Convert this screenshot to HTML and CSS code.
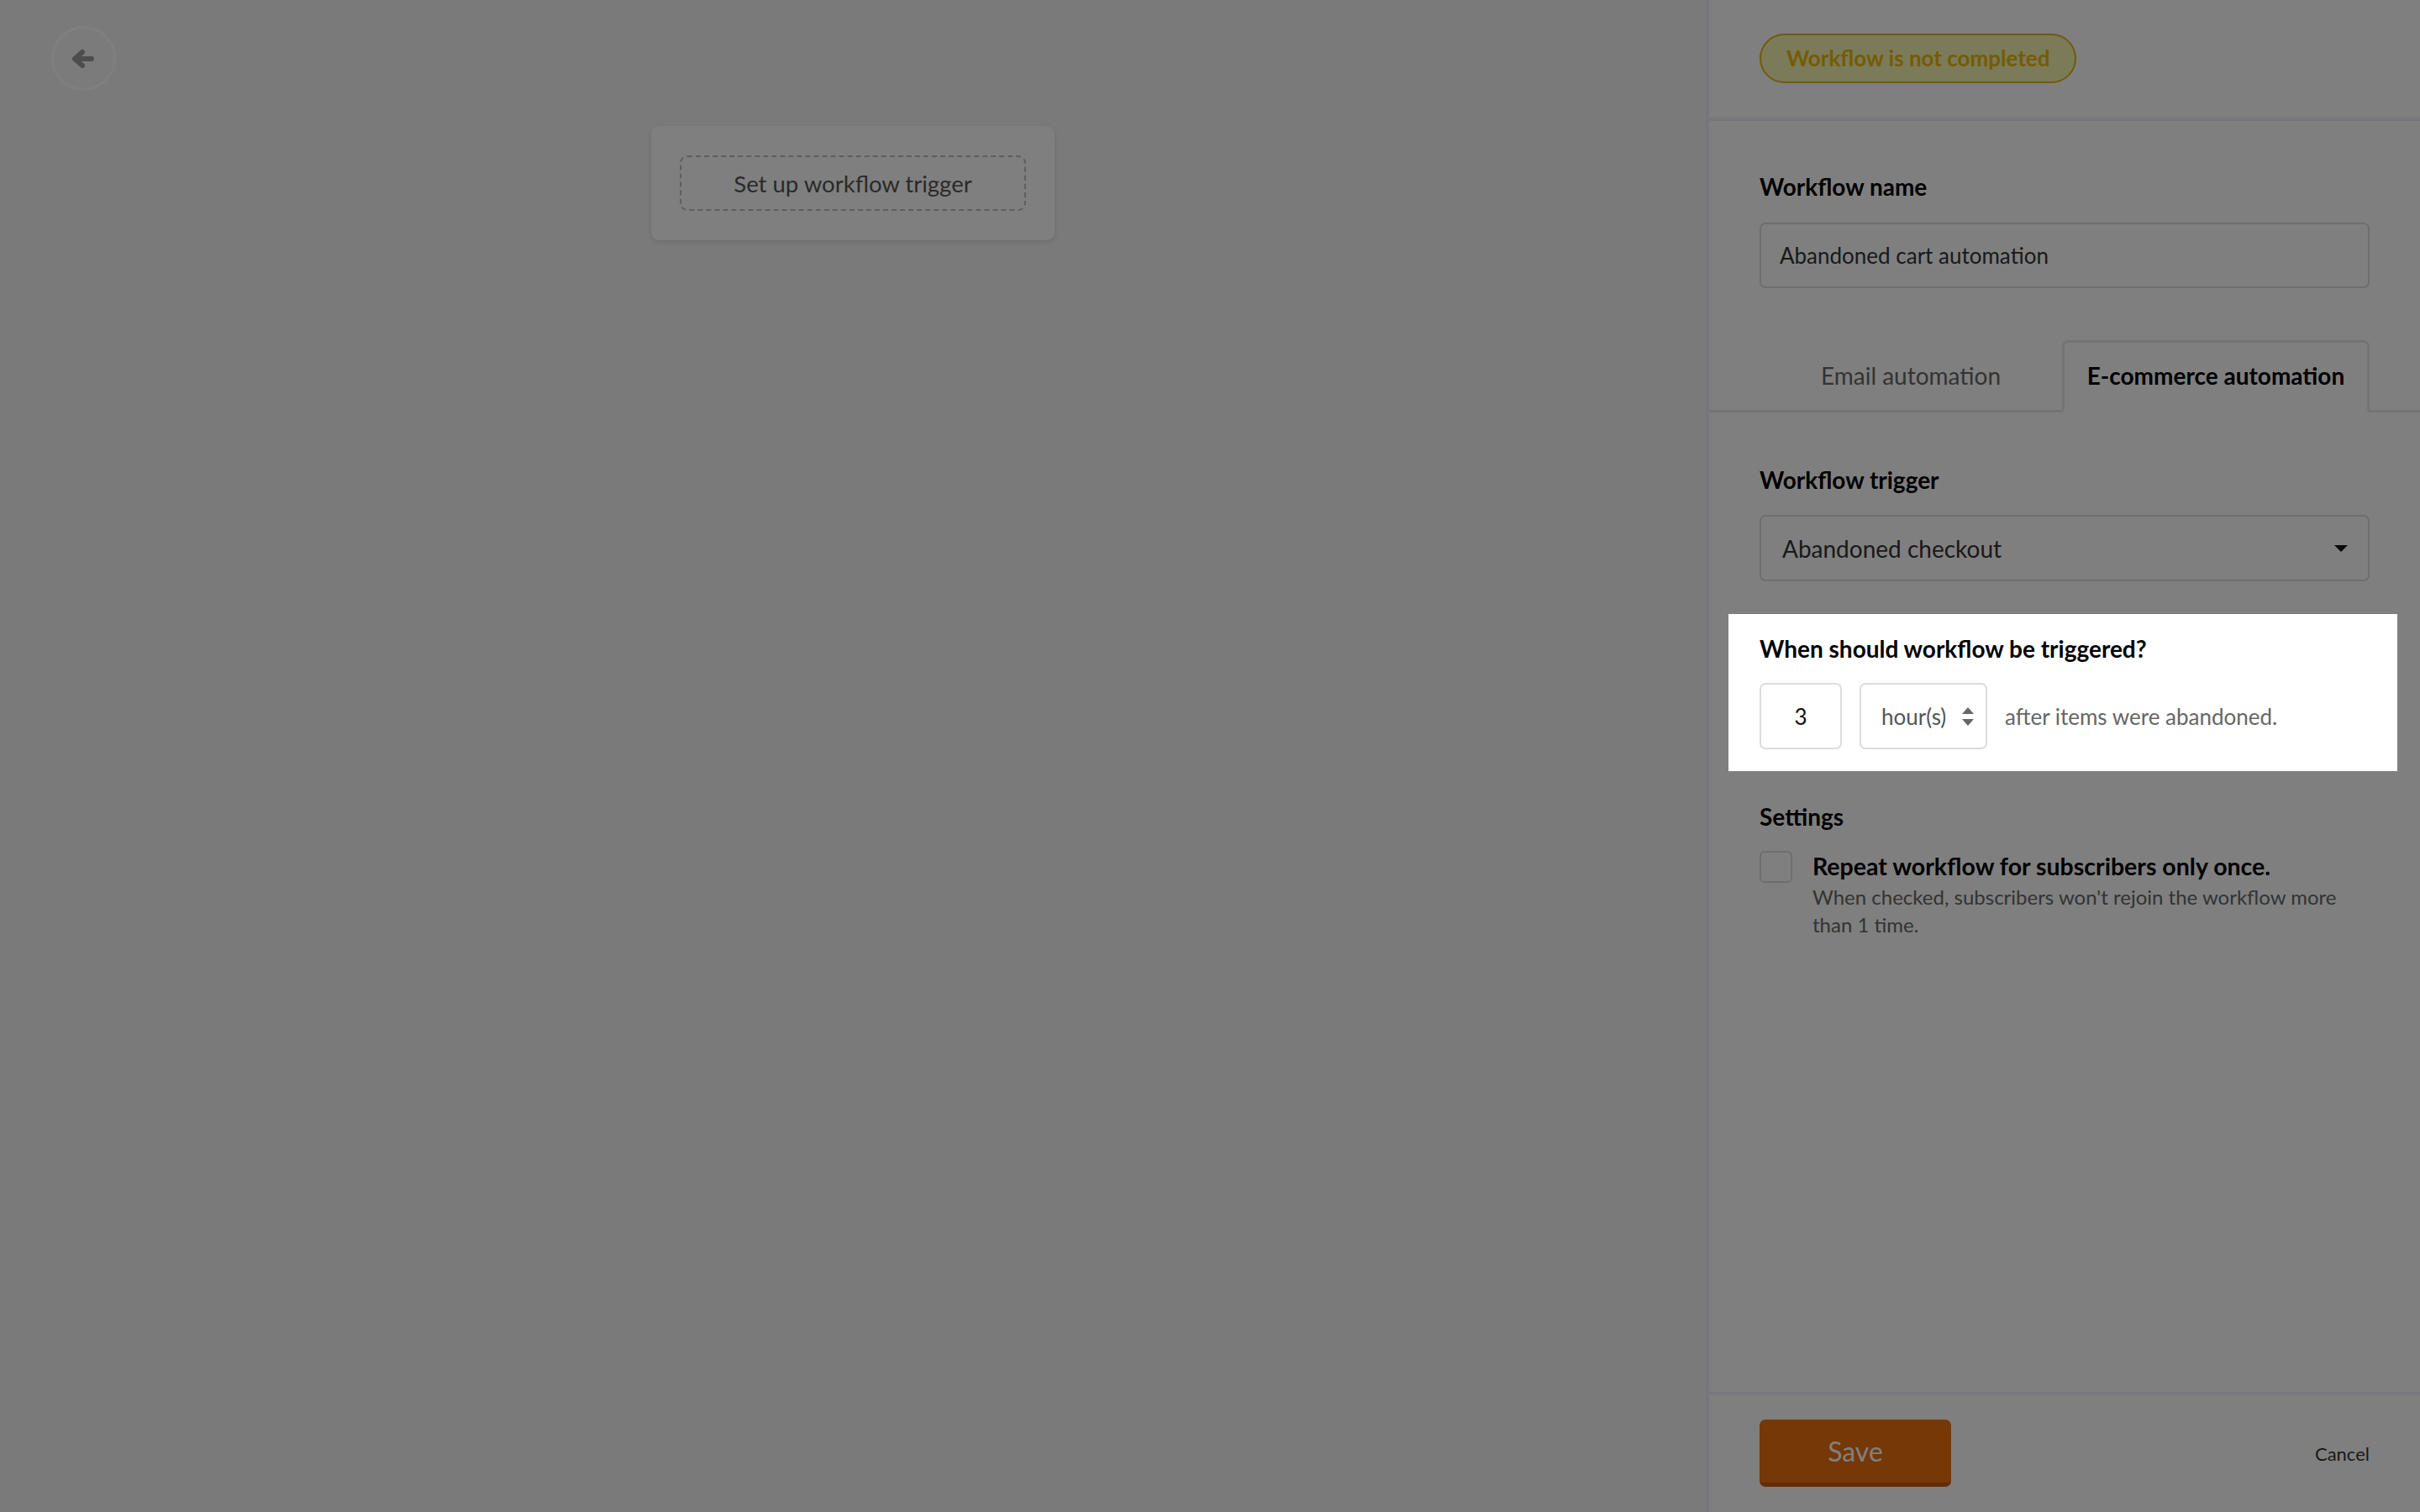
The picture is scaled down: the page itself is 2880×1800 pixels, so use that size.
FILE: index.html
```html
<!DOCTYPE html>
<html lang="en">
<head>
<meta charset="UTF-8">
<title>Workflow editor</title>
<link rel="stylesheet" href="styles.css">
</head>
<body>
    <div id="editor">
        <div id="canvas">
            <button class="back-button" type="button" aria-label="Back">
                <svg width="28" height="24" viewBox="0 0 28 24">
                    <path d="M13 4 L4 12 L13 20 M4 12 H24" fill="none" stroke="#9a9a9a" stroke-width="6" stroke-linecap="round" stroke-linejoin="round"/>
                </svg>
            </button>
            <div class="node">
                <div class="node-trigger">Set up workflow trigger</div>
            </div>
        </div>

        <div id="sidebar">
            <div class="sidebar-head">
                <span class="status-badge">Workflow is not completed</span>
            </div>

            <div class="sidebar-body">
                <label class="field-label" for="wf-name">Workflow name</label>
                <div class="text-field" id="wf-name">Abandoned cart automation</div>

                <div class="tabs">
                    <div class="tab">Email automation</div>
                    <div class="tab active">E-commerce automation</div>
                </div>

                <label class="field-label trigger-label">Workflow trigger</label>
                <div class="select-field">
                    <span>Abandoned checkout</span>
                    <span class="caret"></span>
                </div>

                <!-- this block stays above the dimmed backdrop -->
                <div class="focus-block">
                    <div class="focus-title">When should workflow be triggered?</div>
                    <div class="delay-row">
                        <div class="delay-count">3</div>
                        <div class="delay-unit">
                            <span>hour(s)</span>
                            <span class="spinner">
                                <span class="up"></span>
                                <span class="down"></span>
                            </span>
                        </div>
                        <span class="delay-text">after items were abandoned.</span>
                    </div>
                </div>

                <div class="settings-label">Settings</div>
                <div class="check-row">
                    <span class="checkbox"></span>
                    <div class="check-text">
                        <div class="check-title">Repeat workflow for subscribers only once.</div>
                        <div class="check-desc">When checked, subscribers won't rejoin the workflow more than 1 time.</div>
                    </div>
                </div>
            </div>

            <div class="sidebar-foot">
                <button class="save-button" type="button">Save</button>
                <a class="cancel-link" href="#">Cancel</a>
            </div>
        </div>

        <div class="backdrop"></div>
    </div>
</body>
</html>
```

FILE: styles.css
```css
* {
    margin: 0;
    padding: 0;
    box-sizing: border-box;
}
html, body {
    width: 100%;
    height: 100%;
}
body {
    font-family: Lato, "Open Sans", sans-serif;
    color: #333;
    background-color: #f5f5f5;
}

#editor {
    position: relative;
    display: flex;
    width: 100%;
    height: 100%;
}

/* dimmed backdrop over everything except the focus block */
.backdrop {
    position: absolute;
    inset: 0;
    z-index: 10;
    background-color: rgba(0, 0, 0, 0.5);
}

/* canvas on the left */
#canvas {
    flex: 1;
    display: flex;
    flex-direction: column;
    align-items: center;
    padding: 31px 61px;
    background-color: #f5f5f5;
}
.back-button {
    align-self: flex-start;
    display: flex;
    align-items: center;
    justify-content: center;
    width: 77px;
    height: 77px;
    border: 3px solid #ffffff;
    border-radius: 50%;
    background-color: #f7f7f7;
    cursor: pointer;
}
.back-button svg {
    margin-left: -2px;
}
.node {
    margin-top: 42px;
    width: 480px;
    padding: 35px 34px;
    background-color: #fff;
    border-radius: 9px;
    box-shadow: 0 2px 6px rgba(0, 0, 0, 0.12);
}
.node-trigger {
    height: 66px;
    display: flex;
    align-items: center;
    justify-content: center;
    border: 2px dashed #bdbdbd;
    border-radius: 9px;
    font-size: 27.5px;
    color: #555;
}

/* sidebar */
#sidebar {
    width: 850px;
    display: flex;
    flex-direction: column;
    background-color: #fff;
    border-left: 4px solid #eceef4;
}
.sidebar-head {
    height: 144px;
    padding: 40px 60px 0;
    border-bottom: 4px solid #eceef4;
}
.status-badge {
    display: inline-block;
    height: 59px;
    line-height: 55px;
    padding: 0 30px;
    border: 2px solid #e2b410;
    border-radius: 30px;
    background-color: #f8f6b2;
    color: #e8b808;
    font-size: 26px;
    font-weight: bold;
}
.sidebar-body {
    flex: 1;
    display: flex;
    flex-direction: column;
    padding: 61px 60px 0;
}
.field-label {
    display: block;
    font-size: 28px;
    line-height: 34px;
    font-weight: bold;
    color: #000;
}
.text-field,
.select-field {
    margin-top: 26px;
    height: 78px;
    display: flex;
    align-items: center;
    padding: 0 22px;
    border: 2px solid #dcdcdc;
    border-radius: 7px;
    font-size: 26px;
    color: #333;
}
.select-field {
    margin-top: 25px;
    height: 79px;
    justify-content: space-between;
    padding: 0 24px 0 25px;
    font-size: 28px;
}
.caret {
    width: 0;
    height: 0;
    border-left: 8px solid transparent;
    border-right: 8px solid transparent;
    border-top: 8px solid #111;
}

/* tabs */
.tabs {
    display: flex;
    margin: 62px -60px 63px;
    padding: 0 60px;
    border-bottom: 3px solid #e6e8ee;
}
.tab {
    flex: 1;
    height: 86px;
    margin-bottom: -3px;
    padding-bottom: 3px;
    display: flex;
    align-items: center;
    justify-content: center;
    font-size: 28px;
    color: #666;
}
.tab.active {
    border: 3px solid #e6e8ee;
    border-bottom: 3px solid #fff;
    border-radius: 7px 7px 0 0;
    font-weight: bold;
    color: #000;
}

/* focus block */
.focus-block {
    position: relative;
    z-index: 20;
    margin: 39px -33px 0 -37px;
    padding: 24px 33px 26px 37px;
    background-color: #fff;
}
.focus-title {
    font-size: 28px;
    line-height: 34px;
    font-weight: bold;
    color: #000;
}
.delay-row {
    margin-top: 24px;
    display: flex;
    align-items: center;
    gap: 21px;
}
.delay-count,
.delay-unit {
    height: 79px;
    display: flex;
    align-items: center;
    border: 2px solid #dcdcdc;
    border-radius: 7px;
    font-size: 26px;
}
.delay-count {
    width: 98px;
    justify-content: center;
    color: #111;
}
.delay-unit {
    width: 152px;
    padding: 0 14px 0 24px;
    justify-content: space-between;
    color: #555;
}
.spinner {
    display: flex;
    flex-direction: column;
    gap: 6px;
}
.spinner .up,
.spinner .down {
    width: 0;
    height: 0;
    border-left: 7px solid transparent;
    border-right: 7px solid transparent;
}
.spinner .up {
    border-bottom: 8px solid #666;
}
.spinner .down {
    border-top: 8px solid #666;
}
.delay-text {
    font-size: 26px;
    color: #666;
}

/* settings */
.settings-label {
    margin-top: 37px;
    font-size: 28px;
    line-height: 34px;
    font-weight: bold;
    color: #000;
}
.check-row {
    margin-top: 24px;
    display: flex;
    gap: 24px;
}
.checkbox {
    flex: none;
    width: 39px;
    height: 38px;
    border: 2px solid #dcdcdc;
    border-radius: 6px;
}
.check-text {
    margin-top: 1px;
}
.check-title {
    font-size: 28.5px;
    line-height: 34px;
    font-weight: bold;
    color: #000;
}
.check-desc {
    margin-top: 3px;
    max-width: 640px;
    font-size: 24px;
    line-height: 33px;
    color: #666;
}

/* footer */
.sidebar-foot {
    display: flex;
    align-items: center;
    justify-content: space-between;
    height: 143px;
    padding: 0 60px;
    border-top: 3px solid #eceef4;
}
.save-button {
    width: 228px;
    height: 80px;
    border: none;
    border-bottom: 5px solid #c45c10;
    border-radius: 7px;
    background-color: #ea700c;
    color: #fff;
    font-family: inherit;
    font-size: 32px;
    cursor: pointer;
}
.cancel-link {
    font-size: 22px;
    color: #333;
    text-decoration: none;
}
```
